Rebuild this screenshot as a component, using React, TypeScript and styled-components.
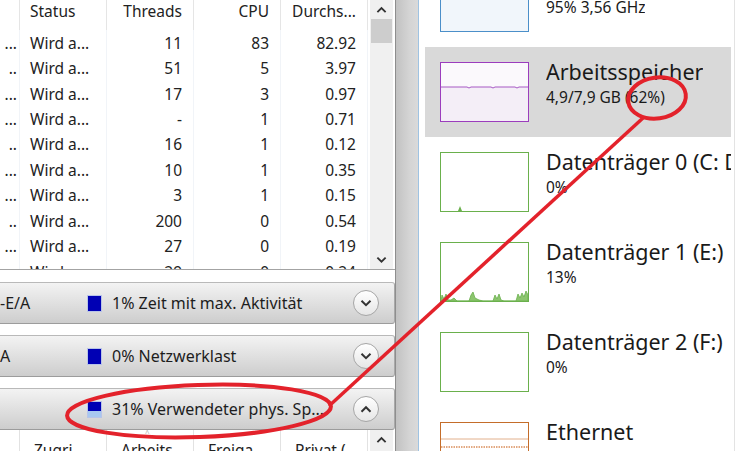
import React from "react";
import styled, { createGlobalStyle } from "styled-components";

const GlobalStyle = createGlobalStyle`
  html, body {
    margin: 0;
    padding: 0;
    width: 739px;
    height: 451px;
    overflow: hidden;
    background: #fff;
    font-family: "Noto Sans", "Open Sans", sans-serif;
  }
`;

const Page = styled.div`
  position: relative;
  display: flex;
  width: 739px;
  height: 451px;
  overflow: hidden;
`;

const LeftPane = styled.div`
  width: 395px;
  flex-shrink: 0;
  display: flex;
  flex-direction: column;
  background: #fff;
  overflow: hidden;
`;

const ProcTable = styled.div`
  height: 270px;
  flex-shrink: 0;
  display: flex;
  border-bottom: 1px solid #a3a3a3;
  box-sizing: border-box;
  overflow: hidden;
`;

const Grid = styled.div`
  width: 368px;
  display: grid;
  grid-template-columns: 20px 87px 87px 87px 87px;
  grid-auto-rows: 25.45px;
  grid-template-rows: 30px;
  font-size: 15.5px;
  color: #222;
`;

const Cell = styled.div<{ $align?: "left" | "right"; $head?: boolean }>`
  display: flex;
  align-items: ${(p) => (p.$head ? "flex-start" : "center")};
  justify-content: ${(p) => (p.$align === "left" ? "flex-start" : "flex-end")};
  padding: ${(p) =>
    p.$align === "left" ? "0 4px 0 10px" : "0 11px 0 4px"};
  padding-top: ${(p) => (p.$head ? "1px" : "0")};
  border-right: 1px solid ${(p) => (p.$head ? "#e5e5e5" : "#f1f4f8")};
  white-space: nowrap;
  overflow: hidden;
  line-height: 20px;
`;

const NameCell = styled(Cell)`
  padding: 0 2px 0 0;
`;

const Scrollbar = styled.div`
  margin-left: 2px;
  width: 23px;
  background: #f0f0f0;
  display: flex;
  flex-direction: column;
  align-items: center;
`;

const ScrollArrow = styled.div`
  height: 19px;
  display: flex;
  align-items: center;
  justify-content: center;
`;

const ScrollThumb = styled.div`
  width: 21px;
  height: 24px;
  background: #cdcdcd;
`;

const ScrollTrack = styled.div`
  flex: 1;
`;

const Sections = styled.div`
  flex-shrink: 0;
  display: flex;
  flex-direction: column;
  gap: 11px;
  padding-top: 12px;
`;

const SectionBar = styled.div`
  height: 42px;
  flex-shrink: 0;
  box-sizing: border-box;
  display: flex;
  align-items: center;
  border-top: 1px solid #b9b9b9;
  border-bottom: 1px solid #9c9c9c;
  border-right: 1px solid #a9a9a9;
  border-radius: 0 3px 3px 0;
  background: linear-gradient(#f3f3f3 0%, #e2e2e2 45%, #cdcdcd 100%);
  font-size: 16px;
  color: #1d1d1d;
`;

const SectionLabel = styled.div`
  width: 87px;
  white-space: nowrap;
  overflow: hidden;
`;

const Swatch = styled.div<{ $partial?: boolean }>`
  width: 13px;
  height: 15px;
  margin-right: 10px;
  border: 1px solid #b8c4e8;
  background: ${(p) =>
    p.$partial
      ? "linear-gradient(#0000b4 0%, #0000b4 62%, #a8c8f0 62%, #a8c8f0 100%)"
      : "#0000b4"};
`;

const SectionText = styled.div`
  flex: 1;
  white-space: nowrap;
`;

const RoundButton = styled.div`
  width: 26px;
  height: 26px;
  margin-right: 15px;
  border-radius: 50%;
  border: 1px solid #a6a6a6;
  background: linear-gradient(#ffffff, #e6e6e6);
  display: flex;
  align-items: center;
  justify-content: center;
  box-sizing: border-box;
`;

const SubHeader = styled.div`
  flex-shrink: 0;
  display: flex;
  height: 30px;
`;

const SubGrid = styled.div`
  width: 368px;
  display: grid;
  grid-template-columns: 20px 87px 87px 87px 87px;
  font-size: 15.5px;
  color: #222;
`;

const SubCell = styled.div`
  border-right: 1px solid #e2e2e2;
  padding: 9px 0 0 14px;
  white-space: nowrap;
  overflow: hidden;
  position: relative;
`;

const SortMark = styled.span`
  position: absolute;
  top: -3px;
  left: 38px;
  font-size: 8px;
  color: #b0b0b0;
`;

const Splitter = styled.div`
  width: 23px;
  flex-shrink: 0;
  border-left: 1px solid #8e8e8e;
  background: linear-gradient(90deg, #c2c2c2, #d4d4d4 60%, #dadada);
  box-sizing: border-box;
`;

const RightPane = styled.div`
  flex: 1;
  display: flex;
  border-left: 1px solid #9fc3e2;
  background: #fff;
`;

const PerfList = styled.div`
  width: 316px;
  border-right: 1px solid #e3e3e3;
  padding-left: 6px;
  padding-right: 3px;
  box-sizing: border-box;
  overflow: hidden;
`;

const ListScroll = styled.div`
  margin-top: -43px;
  display: flex;
  flex-direction: column;
`;

const PerfItem = styled.div<{ $selected?: boolean }>`
  height: 90px;
  flex-shrink: 0;
  box-sizing: border-box;
  display: flex;
  align-items: flex-start;
  padding: 15px 0 0 15px;
  background: ${(p) => (p.$selected ? "#d9d9d9" : "transparent")};
`;

const Thumb = styled.div<{ $color: string; $fill: string }>`
  width: 89px;
  height: 60px;
  box-sizing: border-box;
  border: 1px solid ${(p) => p.$color};
  background: ${(p) => p.$fill};
  flex-shrink: 0;
  overflow: hidden;
  svg {
    display: block;
  }
`;

const PerfText = styled.div`
  margin-left: 17px;
  margin-top: -4px;
  display: flex;
  flex-direction: column;
  white-space: nowrap;
  overflow: hidden;
  color: #1a1a1a;
`;

const PerfTitle = styled.div`
  font-size: 21.5px;
  line-height: 28px;
`;

const PerfSub = styled.div<{ $muted?: boolean }>`
  font-size: 15.5px;
  line-height: 22px;
  color: ${(p) => (p.$muted ? "#8a8a8a" : "#1a1a1a")};
`;

const Overlay = styled.svg`
  position: absolute;
  left: 0;
  top: 0;
  pointer-events: none;
`;

const Chevron = ({ up, size = 12 }: { up?: boolean; size?: number }) => (
  <svg width={size} height={size * 0.7} viewBox="0 0 12 8">
    <path
      d={up ? "M1.5 6.5 L6 2 L10.5 6.5" : "M1.5 1.5 L6 6 L10.5 1.5"}
      fill="none"
      stroke="#333"
      strokeWidth="2"
    />
  </svg>
);

const rows = [
  ["11", "83", "82.92"],
  ["51", "5", "3.97"],
  ["17", "3", "0.97"],
  ["-", "1", "0.71"],
  ["16", "1", "0.12"],
  ["10", "1", "0.35"],
  ["3", "1", "0.15"],
  ["200", "0", "0.54"],
  ["27", "0", "0.19"],
  ["29", "0", "0.24"],
];

const sections = [
  { label: "-E/A", text: "1% Zeit mit max. Aktivität", up: false, partial: false },
  { label: "A", text: "0% Netzwerklast", up: false, partial: false },
  { label: "", text: "31% Verwendeter phys. Sp...", up: true, partial: true },
];

export default function App() {
  return (
    <Page>
      <GlobalStyle />
      <LeftPane>
        <ProcTable>
          <Grid>
            <NameCell $head> </NameCell>
            <Cell $head $align="left">Status</Cell>
            <Cell $head>Threads</Cell>
            <Cell $head>CPU</Cell>
            <Cell $head>Durchs...</Cell>
            {rows.map((r, i) => (
              <React.Fragment key={i}>
                <NameCell>{i % 3 === 1 ? ".." : "..."}</NameCell>
                <Cell $align="left">Wird a...</Cell>
                <Cell>{r[0]}</Cell>
                <Cell>{r[1]}</Cell>
                <Cell>{r[2]}</Cell>
              </React.Fragment>
            ))}
          </Grid>
          <Scrollbar>
            <ScrollArrow>
              <Chevron up size={11} />
            </ScrollArrow>
            <ScrollThumb />
            <ScrollTrack />
            <ScrollArrow>
              <Chevron size={11} />
            </ScrollArrow>
          </Scrollbar>
        </ProcTable>
        <Sections>
          {sections.map((s, i) => (
            <SectionBar key={i}>
              <SectionLabel>{s.label}</SectionLabel>
              <Swatch $partial={s.partial} />
              <SectionText>{s.text}</SectionText>
              <RoundButton>
                <Chevron up={s.up} size={12} />
              </RoundButton>
            </SectionBar>
          ))}
        </Sections>
        <SubHeader>
          <SubGrid>
            <SubCell />
            <SubCell>Zugri...</SubCell>
            <SubCell>
              <SortMark>^</SortMark>Arbeits...
            </SubCell>
            <SubCell>Freiga...</SubCell>
            <SubCell>Privat (</SubCell>
          </SubGrid>
          <Scrollbar>
            <ScrollArrow>
              <Chevron up size={11} />
            </ScrollArrow>
          </Scrollbar>
        </SubHeader>
      </LeftPane>
      <Splitter />
      <RightPane>
        <PerfList>
          <ListScroll>
            <PerfItem>
              <Thumb $color="#4b8fc9" $fill="#f1f6fb" />
              <PerfText>
                <PerfTitle>CPU</PerfTitle>
                <PerfSub>95%  3,56 GHz</PerfSub>
              </PerfText>
            </PerfItem>
            <PerfItem $selected>
              <Thumb $color="#9b3dbd" $fill="#fbf9fc">
                <svg width="87" height="58" viewBox="0 0 87 58">
                  <path
                    d="M0 24 L26 24 Q28 26 30 24 L50 24 Q52 26 54 24 L74 24 Q76 26 78 24 L87 24 L87 58 L0 58 Z"
                    fill="#f4eef7"
                  />
                  <path
                    d="M0 24 L26 24 Q28 26 30 24 L50 24 Q52 26 54 24 L74 24 Q76 26 78 24 L87 24"
                    fill="none"
                    stroke="#a659c4"
                    strokeWidth="1"
                  />
                </svg>
              </Thumb>
              <PerfText>
                <PerfTitle>Arbeitsspeicher</PerfTitle>
                <PerfSub>4,9/7,9 GB (62%)</PerfSub>
              </PerfText>
            </PerfItem>
            <PerfItem>
              <Thumb $color="#6ab04c" $fill="#fff">
                <svg width="87" height="58" viewBox="0 0 87 58">
                  <path d="M17 58 L19 53 L21 58 Z" fill="#6ab04c" />
                </svg>
              </Thumb>
              <PerfText>
                <PerfTitle>Datenträger 0 (C: D:)</PerfTitle>
                <PerfSub>0%</PerfSub>
              </PerfText>
            </PerfItem>
            <PerfItem>
              <Thumb $color="#6ab04c" $fill="#fff">
                <svg width="87" height="58" viewBox="0 0 87 58">
                  <path
                    d="M0 58 L1 52 L3 56 L5 51 L7 57 L10 57 L13 55 L16 58 L28 58 L30 52 L32 49 L34 55 L36 56 L38 57 L42 58 L52 58 L54 52 L56 56 L58 51 L60 57 L63 58 L75 58 L77 51 L79 55 L81 50 L83 54 L85 48 L87 52 L87 58 Z"
                    fill="#8cc56e"
                    stroke="#6ab04c"
                    strokeWidth="0.8"
                  />
                </svg>
              </Thumb>
              <PerfText>
                <PerfTitle>Datenträger 1 (E:)</PerfTitle>
                <PerfSub>13%</PerfSub>
              </PerfText>
            </PerfItem>
            <PerfItem>
              <Thumb $color="#6ab04c" $fill="#fff" />
              <PerfText>
                <PerfTitle>Datenträger 2 (F:)</PerfTitle>
                <PerfSub>0%</PerfSub>
              </PerfText>
            </PerfItem>
            <PerfItem>
              <Thumb $color="#c46d2a" $fill="#fff">
                <svg width="87" height="58" viewBox="0 0 87 58">
                  <line x1="0" y1="16" x2="87" y2="16" stroke="#e2b08c" strokeWidth="1" />
                  <line
                    x1="0"
                    y1="24"
                    x2="87"
                    y2="24"
                    stroke="#d98d5a"
                    strokeWidth="1.5"
                    strokeDasharray="1.5 1"
                  />
                </svg>
              </Thumb>
              <PerfText>
                <PerfTitle>Ethernet</PerfTitle>
                <PerfSub $muted>S: 0 E: 0 KBit/s</PerfSub>
              </PerfText>
            </PerfItem>
          </ListScroll>
        </PerfList>
      </RightPane>
      <Overlay width="739" height="451" viewBox="0 0 739 451">
        <ellipse
          cx="199"
          cy="411"
          rx="132"
          ry="26"
          transform="rotate(-2 199 411)"
          fill="none"
          stroke="#e3222b"
          strokeWidth="4"
        />
        <ellipse
          cx="657"
          cy="98"
          rx="29"
          ry="20.5"
          transform="rotate(-8 657 98)"
          fill="none"
          stroke="#e3222b"
          strokeWidth="4"
        />
        <line x1="329" y1="406" x2="643" y2="118" stroke="#e3222b" strokeWidth="3.5" />
      </Overlay>
    </Page>
  );
}
